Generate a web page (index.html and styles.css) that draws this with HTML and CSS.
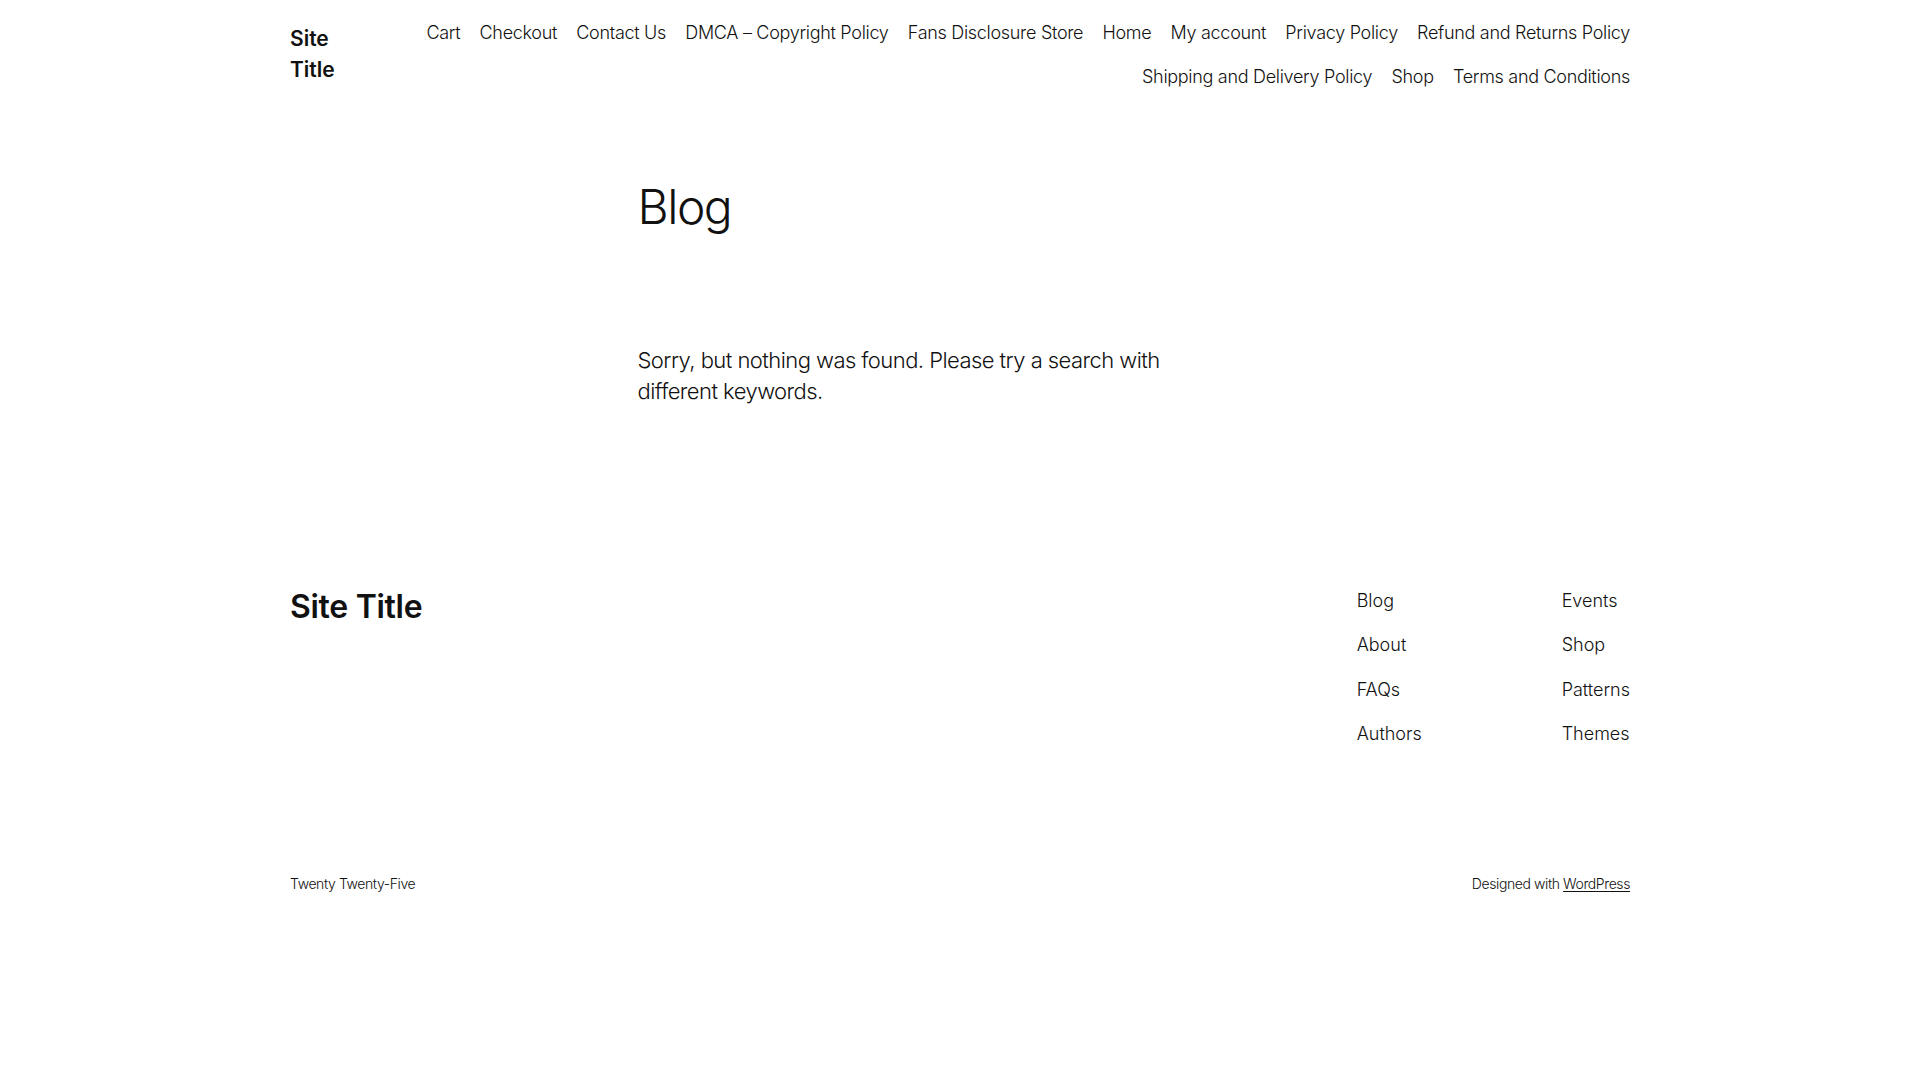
FILE: index.html
```html
<!DOCTYPE html>
<html lang="en">
<head>
  <meta charset="UTF-8">
  <meta name="viewport" content="width=device-width, initial-scale=1.0">
  <title>Blog – Site Title</title>
  <link rel="stylesheet" href="styles.css">
</head>
<body>
  <!-- Шапка: название сайта и меню -->
  <header class="site-header">
    <a class="site-title" href="#">Site Title</a>
    <nav class="main-nav">
      <a href="#">Cart</a>
      <a href="#">Checkout</a>
      <a href="#">Contact Us</a>
      <a href="#">DMCA – Copyright Policy</a>
      <a href="#">Fans Disclosure Store</a>
      <a href="#">Home</a>
      <a href="#">My account</a>
      <a href="#">Privacy Policy</a>
      <a href="#">Refund and Returns Policy</a>
      <a href="#">Shipping and Delivery Policy</a>
      <a href="#">Shop</a>
      <a href="#">Terms and Conditions</a>
    </nav>
  </header>

  <main class="content">
    <h1 class="page-title">Blog</h1>
    <p class="no-results">Sorry, but nothing was found. Please try a search with different keywords.</p>
  </main>

  <footer class="site-footer">
    <div class="footer-top">
      <a class="footer-title" href="#">Site Title</a>
      <div class="footer-menus">
        <nav class="footer-nav">
          <a href="#">Blog</a>
          <a href="#">About</a>
          <a href="#">FAQs</a>
          <a href="#">Authors</a>
        </nav>
        <nav class="footer-nav">
          <a href="#">Events</a>
          <a href="#">Shop</a>
          <a href="#">Patterns</a>
          <a href="#">Themes</a>
        </nav>
      </div>
    </div>
    <div class="footer-bottom">
      <p>Twenty Twenty-Five</p>
      <p>Designed with <a href="#">WordPress</a></p>
    </div>
  </footer>
</body>
</html>
```

FILE: styles.css
```css
body {
  margin: 0;
  background: #fff;
  color: #111;
  font-family: Inter, "Noto Sans", sans-serif;
  font-weight: 300;
  font-size: 22px;
  line-height: 1.4;
  letter-spacing: -0.4px;
}
a {
  color: inherit;
  text-decoration: none;
}
p {
  margin: 0;
}
.site-header {
  max-width: 1340px;
  margin: 0 auto;
  padding-top: 20px;
  display: flex;
  justify-content: space-between;
  align-items: flex-start;
  gap: 60px;
}
.site-title {
  margin-top: 3px;
  width: 50px;
  font-size: 21px;
  font-weight: 600;
  line-height: 31px;
  letter-spacing: 0;
}
.main-nav {
  display: flex;
  flex-wrap: wrap;
  justify-content: flex-end;
  gap: 19.2px;
  font-size: 18px;
  line-height: 1.4;
  letter-spacing: -0.3px;
}
.content {
  width: 645px;
  margin: 0 auto;
  padding-top: 88px;
}
.page-title {
  margin: 0;
  font-size: 48px;
  font-weight: 300;
  line-height: 1.2;
  letter-spacing: -1.5px;
}
.no-results {
  max-width: 580px;
  margin-top: 110px;
  letter-spacing: -0.55px;
}
.site-footer {
  max-width: 1340px;
  margin: 0 auto;
  padding-top: 181px;
}
.footer-top {
  display: flex;
  justify-content: space-between;
  align-items: flex-start;
}
.footer-title {
  font-size: 32px;
  font-weight: 600;
  line-height: 1.2;
  letter-spacing: -0.3px;
}
.footer-menus {
  display: flex;
}
.footer-nav {
  display: flex;
  flex-direction: column;
  gap: 19.2px;
  font-size: 18px;
  line-height: 1.4;
  letter-spacing: 0;
}
.footer-nav:first-child {
  width: 205px;
}
.footer-bottom {
  display: flex;
  justify-content: space-between;
  margin-top: 128px;
  font-size: 14px;
  letter-spacing: -0.4px;
}
.footer-bottom a {
  text-decoration: underline;
  text-underline-offset: 2px;
}
```
